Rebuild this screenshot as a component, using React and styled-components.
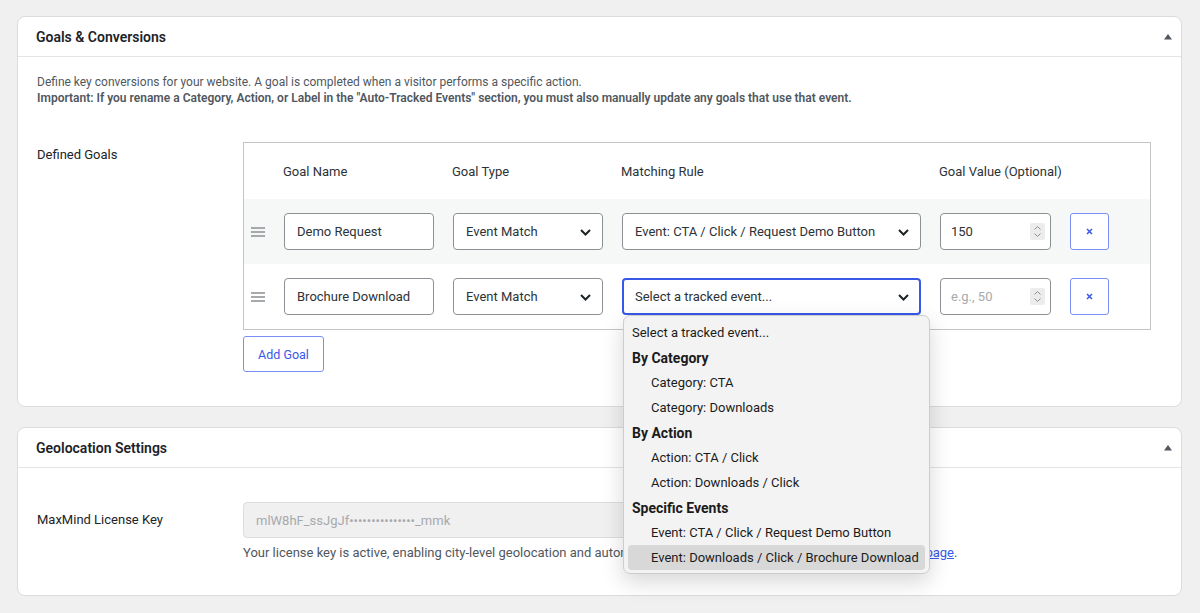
import React from 'react';
import styled, { createGlobalStyle } from 'styled-components';

const GlobalStyle = createGlobalStyle`
  body {
    margin: 0;
    background: #f0f0f1;
    font-family: Roboto, "Noto Sans", sans-serif;
    color: #1d2327;
  }
  * { box-sizing: border-box; }
`;

const Page = styled.div`
  padding: 16px 18px 16px 17px;
  display: flex;
  flex-direction: column;
  gap: 20px;
`;

const Card = styled.section`
  background: #fff;
  border: 1px solid #dcdcde;
  border-radius: 8px;
`;

const CardHeader = styled.div`
  height: 40px;
  display: flex;
  align-items: center;
  justify-content: space-between;
  padding: 0 8px 0 18px;
  border-bottom: 1px solid #e2e4e7;
`;

const CardTitle = styled.h2`
  margin: 0;
  font-size: 14px;
  font-weight: 600;
  color: #1d2327;
`;

const CardBody = styled.div`
  padding: 17px 19px 34px;
`;

const Description = styled.p`
  margin: 0;
  font-size: 12px;
  line-height: 16px;
  color: #50575e;

  strong { font-weight: 600; }
`;

const FormRow = styled.div`
  display: grid;
  grid-template-columns: 206px auto;
  align-items: start;
  margin-top: ${(p) => p.$top || 0}px;
`;

const FieldLabel = styled.div`
  font-size: 13px;
  line-height: 18px;
  padding-top: ${(p) => p.$pad || 0}px;
  color: #1d2327;
`;

const GoalsTable = styled.div`
  width: 908px;
  border: 1px solid #c3c4c7;
  background: #fff;
`;

const GridRow = styled.div`
  display: grid;
  grid-template-columns: 21px 150px 150px 299px 111px 39px;
  column-gap: 19px;
  align-items: center;
  height: ${(p) => (p.$head ? 56 : 65)}px;
  background: ${(p) => (p.$striped ? '#f6f7f7' : '#fff')};
`;

const HeadCell = styled.div`
  font-size: 13px;
  color: #2c3338;
  margin-left: -1px;
  white-space: nowrap;
`;

const Handle = styled.div`
  display: flex;
  justify-content: center;
  padding-left: 7px;
`;

const Field = styled.div`
  position: relative;
  height: 37px;
  display: flex;
  align-items: center;
  padding: 0 ${(p) => (p.$focus ? 11 : 12)}px;
  border: ${(p) => (p.$focus ? '2px solid #3858e9' : '1px solid #8c8f94')};
  border-radius: 4px;
  background: #fff;
  font-size: 13px;
  color: ${(p) => (p.$placeholder ? '#a7aaad' : '#2c3338')};
  white-space: nowrap;
`;

const NumberField = styled(Field)`
  padding-left: 10px;
`;

const Chevron = styled.svg`
  position: absolute;
  right: ${(p) => (p.$focus ? 10 : 11)}px;
  top: 50%;
  margin-top: -3px;
`;

const Spinner = styled.div`
  position: absolute;
  right: 5px;
  top: 9px;
  width: 15px;
  height: 17px;
  border-radius: 2px;
  background: #ececec;
  display: flex;
  align-items: center;
  justify-content: center;
`;

const IconButton = styled.button`
  width: 39px;
  height: 37px;
  border: 1px solid #7a8ff3;
  border-radius: 3px;
  background: #fff;
  display: flex;
  align-items: center;
  justify-content: center;
  padding: 0;
`;

const TextButton = styled.button`
  margin-top: 6px;
  width: 81px;
  height: 36px;
  border: 1px solid #7a8ff3;
  border-radius: 3px;
  background: #fff;
  color: #3858e9;
  font-family: inherit;
  font-size: 12.5px;
  padding: 0;
`;

const Dropdown = styled.div`
  position: absolute;
  top: calc(100% + 2px);
  left: -1px;
  width: 307px;
  z-index: 10;
  padding: 4px 4px 3px;
  background: #f3f3f3;
  border: 1px solid #cdcdcd;
  border-radius: 7px;
  box-shadow: 0 8px 22px rgba(0, 0, 0, 0.16);
`;

const Option = styled.div`
  height: 25px;
  display: flex;
  align-items: center;
  padding-left: ${(p) => (p.$indent ? 23 : 4)}px;
  border-radius: 4px;
  font-size: ${(p) => (p.$group ? 14 : 13)}px;
  font-weight: ${(p) => (p.$group ? 700 : 400)};
  color: #1b1b1b;
  white-space: nowrap;
  background: ${(p) => (p.$active ? '#d8d8d8' : 'transparent')};
`;

const KeyInput = styled.div`
  width: 400px;
  height: 36px;
  display: flex;
  align-items: center;
  padding: 0 12px;
  background: #f0f0f1;
  border: 1px solid #dcdcde;
  border-radius: 4px;
  font-size: 13px;
  color: #a7aaad;
`;

const Help = styled.p`
  margin: 7px 0 0;
  font-size: 13px;
  line-height: 16px;
  color: #50575e;
  white-space: nowrap;

  a { color: #3858e9; }
`;

const Toggle = () => (
  <svg width="10" height="7" viewBox="0 0 10 7">
    <path d="M1 6.5 L5 1 L9 6.5 Z" fill="#50575e" />
  </svg>
);

const DragIcon = () => (
  <svg width="14" height="10" viewBox="0 0 14 10">
    <rect x="0" y="0" width="14" height="2" fill="#a7aaad" />
    <rect x="0" y="4" width="14" height="2" fill="#a7aaad" />
    <rect x="0" y="8" width="14" height="2" fill="#a7aaad" />
  </svg>
);

const SelectArrow = ({ focus }) => (
  <Chevron $focus={focus} width="11" height="7" viewBox="0 0 11 7">
    <path d="M1 1 L5.5 5.5 L10 1" fill="none" stroke="#1d2327" strokeWidth="2" />
  </Chevron>
);

const SpinIcon = () => (
  <Spinner>
    <svg width="9" height="13" viewBox="0 0 9 13">
      <path d="M1.5 4.5 L4.5 1.5 L7.5 4.5 M1.5 8.5 L4.5 11.5 L7.5 8.5" fill="none" stroke="#8c8f94" strokeWidth="1" />
    </svg>
  </Spinner>
);

const RemoveIcon = () => (
  <svg width="7" height="7" viewBox="0 0 7 7">
    <path d="M1 1 L6 6 M6 1 L1 6" stroke="#3858e9" strokeWidth="1.5" />
  </svg>
);

const eventOptions = [
  { label: 'Select a tracked event...' },
  { label: 'By Category', group: true },
  { label: 'Category: CTA', indent: true },
  { label: 'Category: Downloads', indent: true },
  { label: 'By Action', group: true },
  { label: 'Action: CTA / Click', indent: true },
  { label: 'Action: Downloads / Click', indent: true },
  { label: 'Specific Events', group: true },
  { label: 'Event: CTA / Click / Request Demo Button', indent: true },
  { label: 'Event: Downloads / Click / Brochure Download', indent: true, active: true },
];

const goals = [
  { name: 'Demo Request', type: 'Event Match', rule: 'Event: CTA / Click / Request Demo Button', value: '150' },
  { name: 'Brochure Download', type: 'Event Match', rule: '', value: '', open: true },
];

const GoalRow = ({ goal, striped }) => (
  <GridRow $striped={striped}>
    <Handle><DragIcon /></Handle>
    <Field>{goal.name}</Field>
    <Field>
      {goal.type}
      <SelectArrow />
    </Field>
    <Field $focus={goal.open}>
      {goal.rule || 'Select a tracked event...'}
      <SelectArrow focus={goal.open} />
      {goal.open && (
        <Dropdown>
          {eventOptions.map((o) => (
            <Option key={o.label} $group={o.group} $indent={o.indent} $active={o.active}>
              {o.label}
            </Option>
          ))}
        </Dropdown>
      )}
    </Field>
    <NumberField $placeholder={!goal.value}>
      {goal.value || 'e.g., 50'}
      <SpinIcon />
    </NumberField>
    <IconButton type="button"><RemoveIcon /></IconButton>
  </GridRow>
);

export default function App() {
  return (
    <>
      <GlobalStyle />
      <Page>
        <Card>
          <CardHeader>
            <CardTitle>Goals &amp; Conversions</CardTitle>
            <Toggle />
          </CardHeader>
          <CardBody>
            <Description>
              Define key conversions for your website. A goal is completed when a visitor performs a specific action.
              <br />
              <strong>
                Important: If you rename a Category, Action, or Label in the &quot;Auto-Tracked Events&quot; section, you must also manually update any goals that use that event.
              </strong>
            </Description>
            <FormRow $top={36}>
              <FieldLabel $pad={4}>Defined Goals</FieldLabel>
              <div>
                <GoalsTable>
                  <GridRow $head>
                    <span />
                    <HeadCell>Goal Name</HeadCell>
                    <HeadCell>Goal Type</HeadCell>
                    <HeadCell>Matching Rule</HeadCell>
                    <HeadCell>Goal Value (Optional)</HeadCell>
                    <span />
                  </GridRow>
                  {goals.map((g, i) => (
                    <GoalRow key={g.name} goal={g} striped={i % 2 === 0} />
                  ))}
                </GoalsTable>
                <TextButton type="button">Add Goal</TextButton>
              </div>
            </FormRow>
          </CardBody>
        </Card>
        <Card>
          <CardHeader>
            <CardTitle>Geolocation Settings</CardTitle>
            <Toggle />
          </CardHeader>
          <CardBody>
            <FormRow $top={17}>
              <FieldLabel $pad={9}>MaxMind License Key</FieldLabel>
              <div>
                <KeyInput>mlW8hF_ssJgJf•••••••••••••••_mmk</KeyInput>
                <Help>
                  Your license key is active, enabling city-level geolocation and automatic updates. Manage it via your MaxMind <a href="#account">account page</a>.
                </Help>
              </div>
            </FormRow>
          </CardBody>
        </Card>
      </Page>
    </>
  );
}
